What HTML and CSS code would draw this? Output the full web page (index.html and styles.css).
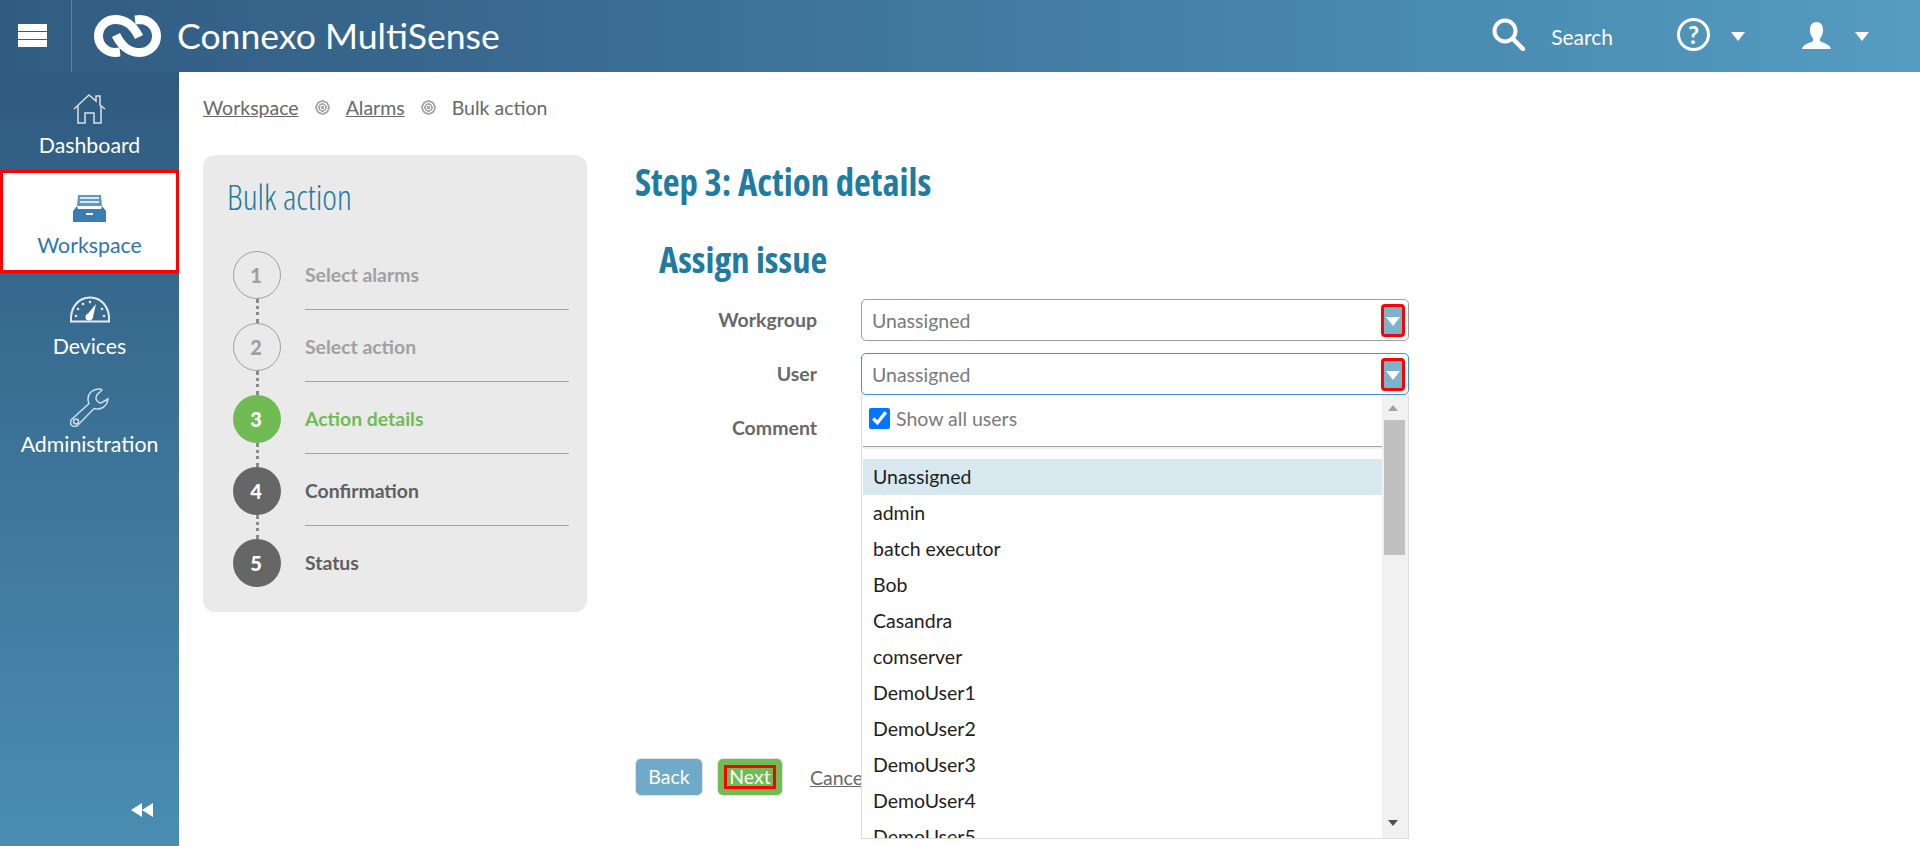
FILE: index.html
```html
<!DOCTYPE html>
<html lang="en">
<head>
    <meta charset="UTF-8">
    <title>Connexo MultiSense - Bulk action</title>
    <link rel="stylesheet" href="styles.css">
</head>
<body>
<header class="topbar">
    <div class="menu-btn"><span></span><span></span><span></span></div>
    <div class="brand">
        <svg class="logo" viewBox="9 7 67 42" fill="none" stroke="#fff" stroke-width="9">
            <path d="M54 29C48 17 41 11.500 30 11.500A16.500 16.500 0 0 0 30 44.500L35 44"/>
            <path d="M31 27C37 39 44 44.500 55 44.500A16.500 16.500 0 0 0 55 11.500L50 12"/>
        </svg>
        <span class="brand-name">Connexo MultiSense</span>
    </div>
    <div class="top-tools">
        <svg class="tool-search" viewBox="0 0 33 33" fill="none" stroke="#fff">
            <circle cx="13" cy="13" r="10.500" stroke-width="4"/>
            <path d="M21 21L31 31" stroke-width="4.500" stroke-linecap="round"/>
        </svg>
        <span class="search-text">Search</span>
        <span class="help-icon">?</span>
        <span class="caret caret-help"></span>
        <svg class="tool-user" viewBox="0 0 29 27" fill="#fff">
            <path d="M14.500 0C9.500 0 8 4 8 8C8 12 9.500 15 11 16.500V19C8 21 1 22 0 27H29C28 22 21 21 18 19V16.500C19.500 15 21 12 21 8C21 4 19.500 0 14.500 0Z"/>
        </svg>
        <span class="caret caret-user"></span>
    </div>
</header>

<div class="page">
    <nav class="sidebar">
        <a class="nav-item">
            <span class="nav-icon">
                <svg width="33" height="31" viewBox="0 0 33 31" fill="none" stroke="#d5e1ea" stroke-width="1.500">
                    <path d="M1 16L16 2L23 8V3H27V12L32 16"/>
                    <path d="M5 13V30H12V20H21V30H28V13"/>
                </svg>
            </span>
            <span>Dashboard</span>
        </a>
        <a class="nav-item nav-item-active">
            <span class="nav-icon">
                <svg width="33" height="27" viewBox="0 0 33 27">
                    <path d="M5 0H28L29 11H4Z" fill="#5f97c6"/>
                    <path d="M7 3H26M7 7H26" stroke="#dbe8f2" stroke-width="2"/>
                    <path d="M4 11L0 16V27H33V16L29 11L28 14H5Z" fill="#3a7cb5"/>
                    <path d="M13 18H20V20H13Z" fill="#fff"/>
                </svg>
            </span>
            <span>Workspace</span>
        </a>
        <a class="nav-item">
            <span class="nav-icon">
                <svg width="42" height="27" viewBox="0 0 42 27" fill="none" stroke="#e3ebf1">
                    <path d="M2 25.500C1 12 9 1.500 21 1.500S41 12 40 25.500Z" stroke-width="2"/>
                    <path d="M17 20L27 8L23.500 23Z" fill="#fff" stroke="none"/>
                    <circle cx="20" cy="21" r="3.500" fill="#fff" stroke="none"/>
                    <g fill="#e3ebf1" stroke="none">
                        <circle cx="7" cy="20" r="1.300"/><circle cx="9" cy="13" r="1.300"/>
                        <circle cx="14" cy="8" r="1.300"/><circle cx="21" cy="6" r="1.300"/>
                        <circle cx="33" cy="13" r="1.300"/><circle cx="35" cy="20" r="1.300"/>
                    </g>
                </svg>
            </span>
            <span>Devices</span>
        </a>
        <a class="nav-item">
            <span class="nav-icon">
                <svg width="39" height="39" viewBox="0 0 39 39" fill="none" stroke="#cfdce6" stroke-width="1.500">
                    <path d="M29 1C23 1 18 5 18 11C18 13 18.500 14.500 19 15.500L2 31C0 33 0 36 2 37.500C4 39 6.500 38.500 8 37L24 20.500C30 22.500 37 19 38 11L31 15C28.500 15 27 13 26 11C26 8 27 6 29 5L32 2C31 1 30 1 29 1Z"/>
                    <circle cx="6" cy="33.500" r="2.500"/>
                </svg>
            </span>
            <span>Administration</span>
        </a>
        <div class="collapse-btn"><span></span><span></span></div>
    </nav>

    <main class="content">
        <div class="breadcrumbs">
            <a href="#">Workspace</a>
            <span class="crumb-sep"></span>
            <a href="#">Alarms</a>
            <span class="crumb-sep"></span>
            <span>Bulk action</span>
        </div>

        <div class="wizard">
            <section class="steps-card">
                <h2 class="steps-title">Bulk action</h2>
                <ul class="steps">
                    <li class="step step-done"><span class="step-num">1</span><span class="step-name">Select alarms</span></li>
                    <li class="step step-done"><span class="step-num">2</span><span class="step-name">Select action</span></li>
                    <li class="step step-current"><span class="step-num">3</span><span class="step-name">Action details</span></li>
                    <li class="step"><span class="step-num">4</span><span class="step-name">Confirmation</span></li>
                    <li class="step step-last"><span class="step-num">5</span><span class="step-name">Status</span></li>
                </ul>
            </section>

            <section class="details">
                <h1 class="details-title">Step 3: Action details</h1>
                <div class="details-body">
                    <h2 class="form-title">Assign issue</h2>
                    <div class="form-row">
                        <label class="form-label">Workgroup</label>
                        <div class="combo">
                            <span>Unassigned</span>
                            <span class="combo-trigger"></span>
                        </div>
                    </div>
                    <div class="form-row">
                        <label class="form-label">User</label>
                        <div class="combo combo-open">
                            <span>Unassigned</span>
                            <span class="combo-trigger"></span>
                            <div class="dropdown">
                                <div class="dropdown-body">
                                    <label class="show-all">
                                        <input type="checkbox" checked>
                                        <span>Show all users</span>
                                    </label>
                                    <div class="dropdown-filter"></div>
                                    <ul class="user-list">
                                        <li class="user-selected">Unassigned</li>
                                        <li>admin</li>
                                        <li>batch executor</li>
                                        <li>Bob</li>
                                        <li>Casandra</li>
                                        <li>comserver</li>
                                        <li>DemoUser1</li>
                                        <li>DemoUser2</li>
                                        <li>DemoUser3</li>
                                        <li>DemoUser4</li>
                                        <li>DemoUser5</li>
                                    </ul>
                                </div>
                                <div class="scroll">
                                    <span class="scroll-up"></span>
                                    <span class="scroll-thumb"></span>
                                    <span class="scroll-down"></span>
                                </div>
                            </div>
                        </div>
                    </div>
                    <div class="form-row">
                        <label class="form-label">Comment</label>
                        <textarea class="comment-box"></textarea>
                    </div>
                </div>
                <div class="actions">
                    <button class="btn btn-back">Back</button>
                    <button class="btn btn-next"><span>Next</span></button>
                    <a class="cancel" href="#">Cancel</a>
                </div>
            </section>
        </div>
    </main>
</div>
</body>
</html>
```

FILE: styles.css
```css
* {
    margin: 0;
    padding: 0;
    box-sizing: border-box;
}

body {
    height: 846px;
    overflow: hidden;
    display: flex;
    flex-direction: column;
    font-family: "Lato", "Liberation Sans", sans-serif;
    font-size: 19.5px;
    color: #686868;
    background-color: #fff;
}

/* top bar */
.topbar {
    height: 72px;
    flex: none;
    display: flex;
    align-items: center;
    background: linear-gradient(90deg, #315c82 0%, #3a6b92 30%, #4a8bb0 75%, #549cc0 100%);
    color: #fff;
}

.menu-btn {
    width: 72px;
    height: 72px;
    flex: none;
    display: flex;
    flex-direction: column;
    gap: 1px;
    padding: 24px 24px 0 18px;
    border-right: 1px solid #5c83a3;
}

.menu-btn span {
    height: 7px;
    background-color: #fff;
}

.brand {
    display: flex;
    align-items: center;
    gap: 16px;
    padding-left: 22px;
}

.logo {
    width: 67px;
    height: 42px;
}

.brand-name {
    font-size: 35.6px;
    line-height: 42px;
}

.top-tools {
    margin-left: auto;
    display: flex;
    align-items: center;
    padding: 0 51px 3px 0;
}

.tool-search {
    width: 33px;
    height: 33px;
}

.search-text {
    margin: 3px 0 0 26px;
    font-size: 21px;
}

.help-icon {
    width: 33px;
    height: 33px;
    margin-left: 64px;
    border: 3px solid #fff;
    border-radius: 50%;
    font-size: 24px;
    font-weight: 700;
    line-height: 27px;
    text-align: center;
}

.caret {
    width: 0;
    height: 0;
    margin-top: 4px;
    border-left: 7.5px solid transparent;
    border-right: 7.5px solid transparent;
    border-top: 9px solid #fff;
}

.caret-help {
    margin-left: 21px;
}

.tool-user {
    width: 29px;
    height: 27px;
    margin: 2px 0 0 57px;
}

.caret-user {
    margin-left: 24px;
}

/* page */
.page {
    flex: 1;
    display: flex;
    min-height: 0;
}

.sidebar {
    width: 179px;
    flex: none;
    display: flex;
    flex-direction: column;
    background: linear-gradient(180deg, #2f5a80 0%, #4a8db1 100%);
    color: #fff;
    font-size: 21.3px;
}

.nav-item {
    display: flex;
    flex-direction: column;
    align-items: center;
    height: 98px;
    padding-top: 16px;
    line-height: 24px;
}

.nav-icon {
    height: 40px;
    margin-bottom: 5px;
    display: flex;
    align-items: center;
    justify-content: center;
}

.nav-item-active {
    height: 103px;
    padding-top: 15px;
    border: 3px solid #f00;
    background-color: #fff;
    color: #2f75ad;
}

.collapse-btn {
    margin-top: auto;
    display: flex;
    justify-content: flex-end;
    padding: 0 26px 29px 0;
}

.collapse-btn span {
    width: 0;
    height: 0;
    border-top: 7px solid transparent;
    border-bottom: 7px solid transparent;
    border-right: 11px solid #fff;
}

/* content */
.content {
    flex: 1;
    padding: 23px 0 0 24px;
}

.breadcrumbs {
    display: flex;
    align-items: center;
    height: 24px;
}

.breadcrumbs a {
    color: #686868;
}

.crumb-sep {
    width: 15px;
    height: 15px;
    margin: 0 16px;
    border-radius: 50%;
    background: radial-gradient(circle, #a8a8a8 0 1.5px, #fff 2px 2.5px, #a8a8a8 3px 4px, #fff 4.5px 5px, #a8a8a8 5.5px 7px, transparent 7.5px);
}

.wizard {
    display: flex;
    gap: 48px;
    margin-top: 36px;
}

.steps-card {
    width: 384px;
    height: 457px;
    padding: 21px 18px 0 24px;
    border-radius: 12px;
    background-color: #eaeaea;
}

.steps-title {
    font-family: "Open Sans", "Liberation Sans", sans-serif;
    font-stretch: 75%;
    font-size: 35px;
    font-weight: 300;
    line-height: 42px;
    color: #1f7ba0;
}

.steps {
    list-style: none;
    margin: 33px 0 0 6px;
}

.step {
    position: relative;
    display: flex;
    gap: 24px;
    height: 72px;
    font-size: 19.4px;
    font-weight: 700;
    color: #5f5f5f;
}

.step::after {
    content: "";
    position: absolute;
    left: 22.500px;
    top: 48px;
    height: 24px;
    border-left: 3px dotted #8a8a8a;
}

.step-last::after {
    display: none;
}

.step-num {
    width: 48px;
    height: 48px;
    flex: none;
    padding-right: 2px;
    border-radius: 50%;
    background-color: #666;
    color: #fff;
    font-size: 20px;
    font-weight: 900;
    line-height: 48px;
    text-align: center;
}

.step-name {
    flex: 1;
    height: 59px;
    line-height: 48px;
    border-bottom: 1px solid #a5a5a5;
}

.step-last .step-name {
    border-bottom: none;
}

.step-done {
    color: #a0a0a0;
}

.step-done .step-num {
    border: 1px solid #a0a0a0;
    background-color: transparent;
    color: #a0a0a0;
    line-height: 46px;
}

.step-current {
    color: #70bb54;
}

.step-current .step-num {
    background-color: #70bb54;
}

.details {
    width: 774px;
}

.details-title,
.form-title {
    font-family: "Open Sans", "Liberation Sans", sans-serif;
    font-stretch: 75%;
    font-weight: 700;
    color: #1f7ba0;
}

.details-title {
    height: 54px;
    font-size: 36.8px;
    line-height: 54px;
}

.details-body {
    margin: 24px 0 0 24px;
}

.form-title {
    height: 52px;
    font-size: 36.5px;
    line-height: 52px;
    margin-bottom: 14px;
}

.form-row {
    display: flex;
    gap: 44px;
    margin-bottom: 12px;
}

.form-label {
    width: 158px;
    flex: none;
    line-height: 42px;
    text-align: right;
    font-weight: 700;
}

.combo,
.comment-box {
    width: 548px;
    flex: none;
    border: 1px solid #a0a0a0;
    border-radius: 5px;
}

.combo {
    position: relative;
    display: flex;
    align-items: center;
    justify-content: space-between;
    height: 42px;
    padding: 0 3px 0 10px;
    color: #7a7a7a;
}

.combo-open {
    border-color: #3d93d6;
}

.combo-trigger {
    width: 24px;
    height: 33px;
    display: flex;
    align-items: center;
    justify-content: center;
    border: 3px solid #f00;
    border-radius: 4px;
    background-color: #7db2cc;
}

.combo-trigger::after {
    content: "";
    margin-top: 3px;
    border-left: 7.500px solid transparent;
    border-right: 7.500px solid transparent;
    border-top: 9px solid #fff;
}

.comment-box {
    height: 335px;
    resize: none;
}

.dropdown {
    position: absolute;
    left: -1px;
    top: 41px;
    z-index: 2;
    width: 548px;
    height: 444px;
    display: flex;
    overflow: hidden;
    border: 1px solid #ddd;
    border-top: none;
    background-color: #fff;
}

.dropdown-body {
    flex: 1;
    min-width: 0;
}

.show-all {
    display: flex;
    align-items: center;
    gap: 6px;
    height: 51px;
    padding: 0 0 4px 7px;
}

.show-all input {
    width: 21px;
    height: 21px;
    accent-color: #0075ff;
}

.dropdown-filter {
    height: 3px;
    margin-left: 1px;
    border-top: 1px solid #a0a0a0;
    border-bottom: 2px solid #f0f0f0;
}

.user-list {
    list-style: none;
    margin: 10px 0 0 1px;
    color: #1e1e1e;
}

.user-list li {
    height: 36px;
    padding-left: 10px;
    line-height: 36px;
}

.user-list .user-selected {
    background-color: #d8e8ef;
}

.scroll {
    position: relative;
    width: 26px;
    flex: none;
    background-color: #f1f1f1;
}

.scroll-up,
.scroll-down,
.scroll-thumb {
    position: absolute;
}

.scroll-up {
    left: 6px;
    top: 10px;
    border-left: 5.500px solid transparent;
    border-right: 5.500px solid transparent;
    border-bottom: 6px solid #a3a3a3;
}

.scroll-down {
    left: 6px;
    bottom: 12px;
    border-left: 5.500px solid transparent;
    border-right: 5.500px solid transparent;
    border-top: 6px solid #505050;
}

.scroll-thumb {
    left: 2px;
    top: 25px;
    width: 21px;
    height: 135px;
    background-color: #c0c0c0;
}

.actions {
    position: relative;
    display: flex;
    align-items: center;
    gap: 14px;
    height: 38px;
    margin-top: 16px;
}

.btn {
    height: 38px;
    border: 1px solid #dfe5e8;
    border-radius: 6px;
    color: #fff;
    font: inherit;
    line-height: 18px;
}

.btn-back {
    width: 68px;
    background-color: #71aac8;
}

.btn-next {
    width: 66px;
    background-color: #70bb54;
}

.btn-next span {
    display: block;
    width: 52px;
    margin: 0 auto;
    border: 3px solid #f00;
}

.cancel {
    margin-left: 13px;
    color: #686868;
}
```
